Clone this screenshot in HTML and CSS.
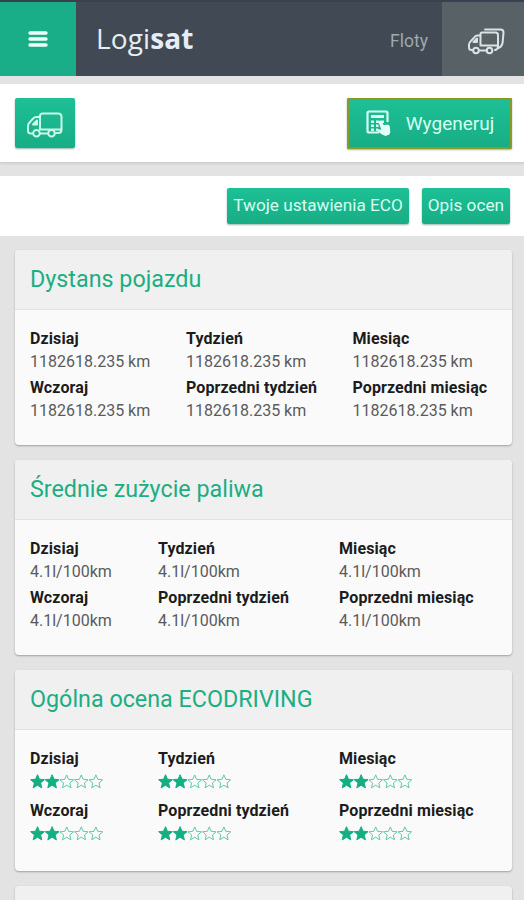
FILE: index.html
```html
<!DOCTYPE html>
<html lang="pl">
<head>
    <meta charset="UTF-8">
    <meta name="viewport" content="width=device-width, initial-scale=1.0">
    <title>Logisat</title>
    <link rel="stylesheet" href="styles.css">
</head>
<body>
    <!-- Shared icons -->
    <svg class="sprite">
        <symbol id="star-full" viewBox="0 0 15 15">
            <path d="M7.5.7l1.9 4.5 5 .5-3.8 3.2 1.2 5-4.3-2.7-4.3 2.7 1.2-5L.6 5.7l5-.5z" fill="#14ae82" stroke="#14ae82" stroke-width="1"/>
        </symbol>
        <symbol id="star-empty" viewBox="0 0 15 15">
            <path d="M7.5.9l1.9 4.400 4.900.5-3.700 3.200 1.100 4.800-4.200-2.600-4.200 2.600L4.400 9 .7 5.800l4.900-.5z" fill="none" stroke="#4fc2a1" stroke-width=".9"/>
        </symbol>
        <symbol id="rating" viewBox="0 0 74 15">
            <use href="#star-full" x="0" width="15" height="15"/>
            <use href="#star-full" x="14.6" width="15" height="15"/>
            <use href="#star-empty" x="29.2" width="15" height="15"/>
            <use href="#star-empty" x="43.8" width="15" height="15"/>
            <use href="#star-empty" x="58.4" width="15" height="15"/>
        </symbol>
    </svg>

    <!-- Top bar -->
    <header class="topbar">
        <button class="menu-button" aria-label="Menu">
            <svg width="20" height="16" viewBox="0 0 20 16">
                <path d="M2 2h16M2 8h16M2 14h16" stroke="#eefff9" stroke-width="3.4" stroke-linecap="round"/>
            </svg>
        </button>
        <div class="logo">Logi<b>sat</b></div>
        <span class="fleet-label">Floty</span>
        <button class="fleet-button" aria-label="Floty">
            <svg width="38" height="27" viewBox="0 0 38 27" fill="none" stroke="#dce2e4" stroke-width="2" stroke-linejoin="round" stroke-linecap="round">
                <path d="M18 1.500h15.500q3 0 3 3l-.8 9.500q-.7 5-4.500 6"/>
                <path d="M13.500 17.500V6q0-1.500 1.500-1.500h13.500q2.500 0 2.500 2.500v11.500q0 3-3 3.500M13.500 17.500H30"/>
                <path d="M13 7.500h-2.500q-2 0-3.200 1.800L4 13q-2 1.600-2 3.500v3q0 2.500 2.500 2.500H6M12 22.500h8"/>
                <path d="M10 10.500v3.500H6.500z"/>
                <circle cx="9" cy="22.500" r="2.800"/>
                <circle cx="22.500" cy="22.500" r="2.800"/>
            </svg>
        </button>
    </header>

    <!-- Actions -->
    <section class="panel actions">
        <button class="btn vehicle-button" aria-label="Pojazd">
            <svg width="38" height="28" viewBox="0 0 38 28" fill="none" stroke="#c9faea" stroke-width="2" stroke-linejoin="round" stroke-linecap="round">
                <path d="M14 18.500V5Q14 2.500 16.500 2.500H32q3.500 0 3.500 3.500V18.500q0 3.500-3 3.500H30M14 18.500h21M22 22.500h-8"/>
                <path d="M14 6h-3.500Q8.500 6 7 7.600L3.500 11.500Q2 13 2 15V20q0 2.500 3 2.500h1.500"/>
                <path d="M11 9.500v4H7z" fill="#c9faea"/>
                <circle cx="10.500" cy="22.300" r="3.300"/>
                <circle cx="25.500" cy="22.300" r="3.300"/>
            </svg>
        </button>
        <button class="btn generate-button">
            <svg width="26" height="27" viewBox="0 0 26 27">
                <path d="M22.500 12V3q0-1.500-1.500-1.500H4Q2.500 1.500 2.500 3v18q0 1.500 1.500 1.500h10" fill="none" stroke="#d5fff1" stroke-width="2.200"/>
                <path d="M6 5h13v3H6zM6 10.500h3v2.500H6zM11 10.500h3v2.500h-3zM16 10.500h3V13h-3zM6 14.500h3V17H6zM11 14.500h2.500V17H11zM6 18.500h3V21H6zM11 18.500h2V21h-2z" fill="#d5fff1"/>
                <path d="M14.500 10.800q1.500-1 2.300.7l1.700 3.600 4.300-.4q1.800 0 2 2l.5 5.300q0 1.700-1.500 2.700l-3.300 1.300-3.500-1.500-4.200-3.200q-1.400-1.500.4-2.100l3.200.5-2.700-7.300q-.2-1 .8-1.600z" fill="#e4fff7"/>
            </svg>
            Wygeneruj
        </button>
    </section>

    <section class="panel eco">
        <button class="btn eco-button">Twoje ustawienia ECO</button>
        <button class="btn eco-button">Opis ocen</button>
    </section>

    <!-- Cards -->
    <main class="cards">
        <section class="card">
            <h2>Dystans pojazdu</h2>
            <div class="stats distance">
                <div><b>Dzisiaj</b><span>1182618.235 km</span></div>
                <div><b>Tydzień</b><span>1182618.235 km</span></div>
                <div><b>Miesiąc</b><span>1182618.235 km</span></div>
                <div><b>Wczoraj</b><span>1182618.235 km</span></div>
                <div><b>Poprzedni tydzień</b><span>1182618.235 km</span></div>
                <div><b>Poprzedni miesiąc</b><span>1182618.235 km</span></div>
            </div>
        </section>

        <section class="card">
            <h2>Średnie zużycie paliwa</h2>
            <div class="stats">
                <div><b>Dzisiaj</b><span>4.1l/100km</span></div>
                <div><b>Tydzień</b><span>4.1l/100km</span></div>
                <div><b>Miesiąc</b><span>4.1l/100km</span></div>
                <div><b>Wczoraj</b><span>4.1l/100km</span></div>
                <div><b>Poprzedni tydzień</b><span>4.1l/100km</span></div>
                <div><b>Poprzedni miesiąc</b><span>4.1l/100km</span></div>
            </div>
        </section>

        <section class="card">
            <h2>Ogólna ocena ECODRIVING</h2>
            <div class="stats ratings">
                <div><b>Dzisiaj</b><svg class="stars"><use href="#rating"/></svg></div>
                <div><b>Tydzień</b><svg class="stars"><use href="#rating"/></svg></div>
                <div><b>Miesiąc</b><svg class="stars"><use href="#rating"/></svg></div>
                <div><b>Wczoraj</b><svg class="stars"><use href="#rating"/></svg></div>
                <div><b>Poprzedni tydzień</b><svg class="stars"><use href="#rating"/></svg></div>
                <div><b>Poprzedni miesiąc</b><svg class="stars"><use href="#rating"/></svg></div>
            </div>
        </section>

        <section class="card next-card"></section>
    </main>
</body>
</html>
```
FILE: styles.css
```css
* {
    box-sizing: border-box;
}

body {
    margin: 0;
    background-color: #e3e3e3;
    font-family: Roboto, Arial, sans-serif;
}

button {
    margin: 0;
    padding: 0;
    border: 0;
    font-family: inherit;
}

.sprite {
    display: none;
}

/* Top bar */
.topbar {
    display: flex;
    align-items: stretch;
    height: 76px;
    border-top: 2px solid #38414d;
    background-color: #414a54;
}

.menu-button {
    display: flex;
    justify-content: center;
    align-items: center;
    width: 76px;
    background-color: #1aae88;
}

.logo {
    flex: 1;
    padding-left: 20px;
    font-family: "Open Sans", sans-serif;
    font-size: 28px;
    line-height: 73px;
    letter-spacing: 0.1px;
    color: #e6edf4;
}

.fleet-label {
    padding-right: 14px;
    font-size: 17.5px;
    line-height: 78px;
    color: #a0a7ad;
}

.fleet-button {
    display: flex;
    justify-content: center;
    align-items: center;
    width: 82px;
    padding: 4px 0 0 6px;
    background-color: #576166;
}

/* White strips */
.panel {
    display: flex;
    background-color: #fff;
}

.actions {
    justify-content: space-between;
    align-items: flex-start;
    height: 78px;
    margin-top: 8px;
    padding: 14px 12px 0 15px;
    box-shadow: 0 2px 2px #cfcfcf;
}

.eco {
    justify-content: flex-end;
    gap: 13px;
    height: 60px;
    margin-top: 14px;
    padding: 12px 14px 0 0;
}

.btn {
    display: flex;
    justify-content: center;
    align-items: center;
    border-radius: 2px;
    background: linear-gradient(#1dc096, #18ad85);
    color: #d5fff1;
    box-shadow: 0 1px 2px rgba(0, 80, 55, 0.4);
}

.vehicle-button {
    width: 60px;
    height: 50px;
    padding-top: 4px;
}

.generate-button {
    gap: 15px;
    width: 165px;
    height: 51px;
    border: 2px solid #8b9a24;
    border-radius: 1px;
    font-size: 19px;
}

.eco-button {
    height: 36px;
    padding: 0 6px 2px;
    font-size: 17.2px;
}

/* Cards */
.cards {
    display: flex;
    flex-direction: column;
    gap: 15px;
    padding: 14px 12px 0 15px;
}

.card {
    border-radius: 4px;
    background-color: #fafafa;
    box-shadow: 0 1px 2px rgba(0, 0, 0, 0.3);
}

.card h2 {
    height: 60px;
    margin: 0;
    padding-left: 15px;
    border-bottom: 1px solid #e2e2e2;
    border-radius: 4px 4px 0 0;
    background-color: #f0f0f0;
    font-size: 23.3px;
    font-weight: 400;
    line-height: 59px;
    color: #1aae82;
}

.stats {
    display: grid;
    grid-template-columns: 128px 181px 1fr;
    row-gap: 3.5px;
    padding: 17.5px 0 22px 15px;
}

.distance {
    grid-template-columns: 156px 166.5px 1fr;
}

.stats b,
.stats span {
    display: block;
    font-size: 16px;
    white-space: nowrap;
}

.stats b {
    line-height: 22px;
    letter-spacing: 0.1px;
    color: #1c1c1c;
}

.stats span {
    line-height: 24px;
    color: #5b5b5b;
}

.ratings {
    row-gap: 5.5px;
    padding-bottom: 24px;
}

.stars {
    display: block;
    width: 74px;
    height: 15px;
    margin: 4px 0 6px;
}

/* Top edge of the following card */
.next-card {
    height: 14px;
    border-radius: 4px 4px 0 0;
    background-color: #f0f0f0;
}
```
